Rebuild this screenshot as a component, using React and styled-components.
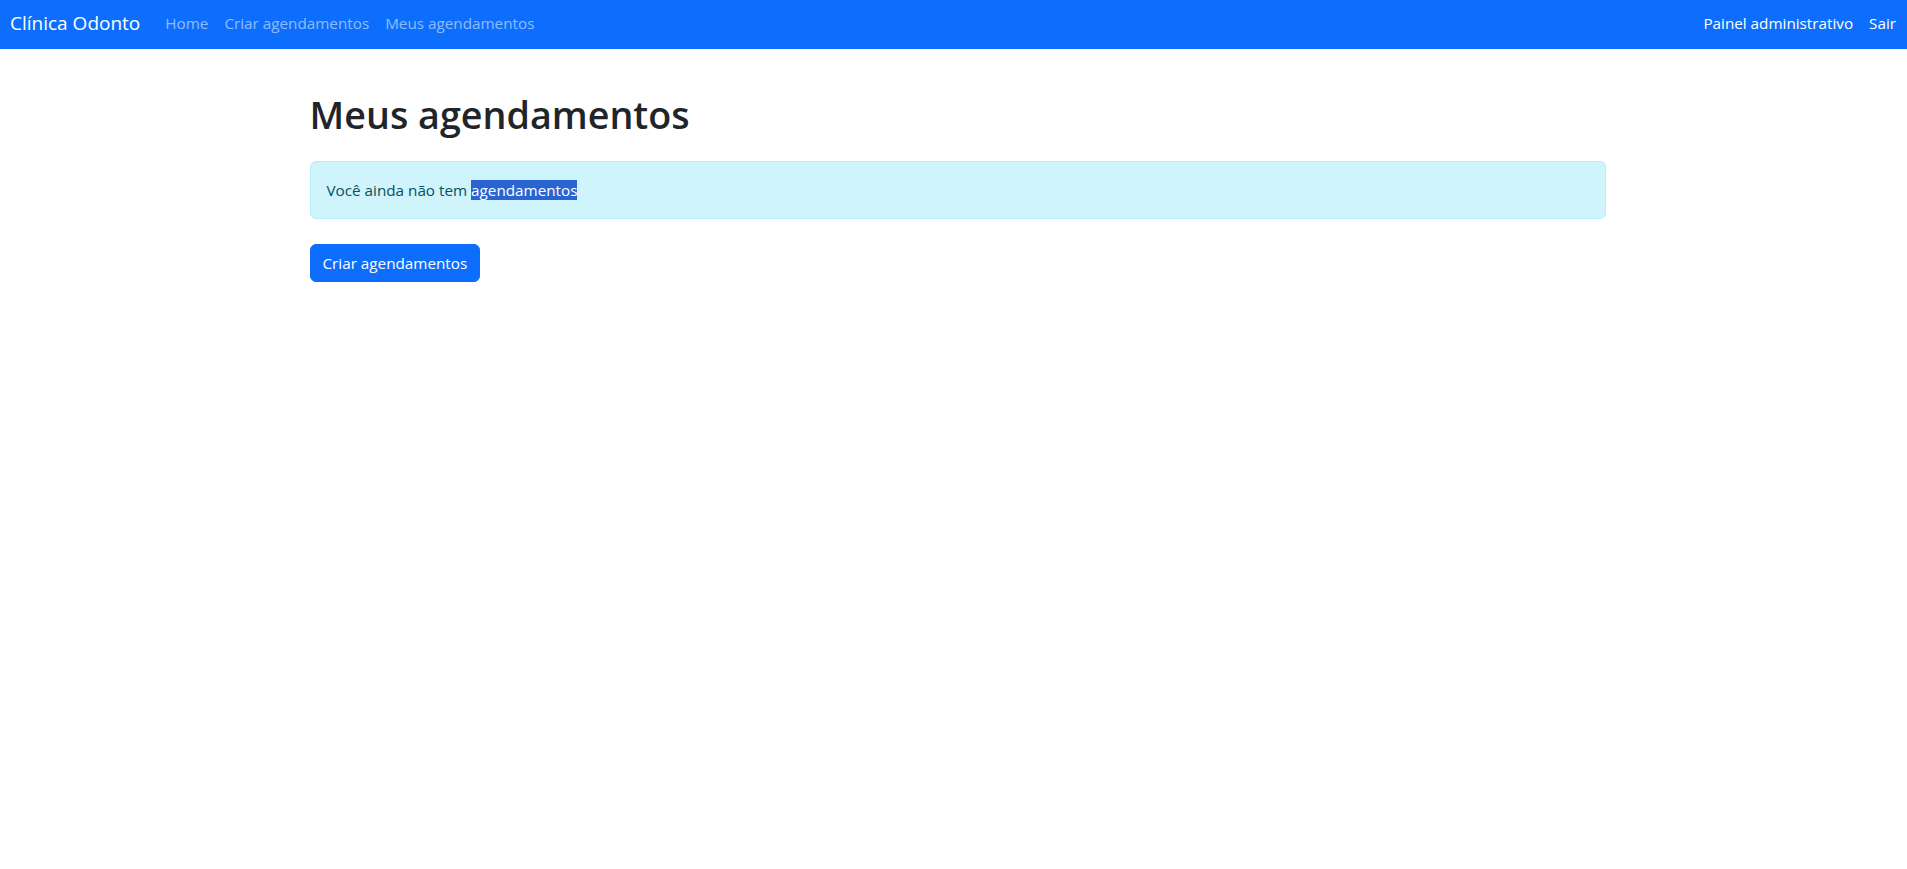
import React from "react";
import styled, { createGlobalStyle } from "styled-components";

const GlobalStyle = createGlobalStyle`
  *, *::before, *::after {
    box-sizing: border-box;
  }
  body {
    margin: 0;
    font-family: "Segoe UI", "Open Sans", "Noto Sans", sans-serif;
    font-size: 15.25px;
    line-height: 24px;
    color: #212529;
    background: #fff;
  }
`;

const Navbar = styled.nav`
  display: flex;
  align-items: center;
  justify-content: space-between;
  height: 49px;
  padding: 0 11px 4px 10px;
  background-color: #0d6efd;
`;

const NavGroup = styled.div`
  display: flex;
  align-items: center;
`;

const Brand = styled.a`
  font-size: 19px;
  color: #fff;
  text-decoration: none;
  margin-right: 17px;
  padding: 5px 0;
`;

const NavLink = styled.a`
  padding: 8px;
  color: ${(p) => (p.$light ? "#fff" : "rgba(255, 255, 255, 0.55)")};
  text-decoration: none;
  cursor: pointer;
  &:last-child {
    padding-right: 0;
  }
`;

const Container = styled.main`
  max-width: 1304px;
  margin: 0 auto;
  padding: 43px 0 0 8px;
`;

const Title = styled.h1`
  margin: 0 0 24px;
  font-size: 37.7px;
  font-weight: 600;
  line-height: 45px;
`;

const Alert = styled.div`
  padding: 16px;
  margin-bottom: 25px;
  color: #055160;
  background-color: #cff4fc;
  border: 1px solid #b6effb;
  border-radius: 6px;
`;

const Selected = styled.span`
  background-color: #2a64d0;
  color: #fff;
`;

const Button = styled.button`
  font-family: inherit;
  font-size: 15.25px;
  line-height: 24px;
  padding: 6px 12px;
  color: #fff;
  background-color: #0d6efd;
  border: 1px solid #0d6efd;
  border-radius: 6px;
  cursor: pointer;
`;

const App = () => {
  return (
    <>
      <GlobalStyle />
      <Navbar>
        <NavGroup>
          <Brand>Clínica Odonto</Brand>
          <NavLink>Home</NavLink>
          <NavLink>Criar agendamentos</NavLink>
          <NavLink>Meus agendamentos</NavLink>
        </NavGroup>
        <NavGroup>
          <NavLink $light>Painel administrativo</NavLink>
          <NavLink $light>Sair</NavLink>
        </NavGroup>
      </Navbar>
      <Container>
        <Title>Meus agendamentos</Title>
        <Alert>
          Você ainda não tem <Selected>agendamentos</Selected>
        </Alert>
        <Button>Criar agendamentos</Button>
      </Container>
    </>
  );
};

export default App;
